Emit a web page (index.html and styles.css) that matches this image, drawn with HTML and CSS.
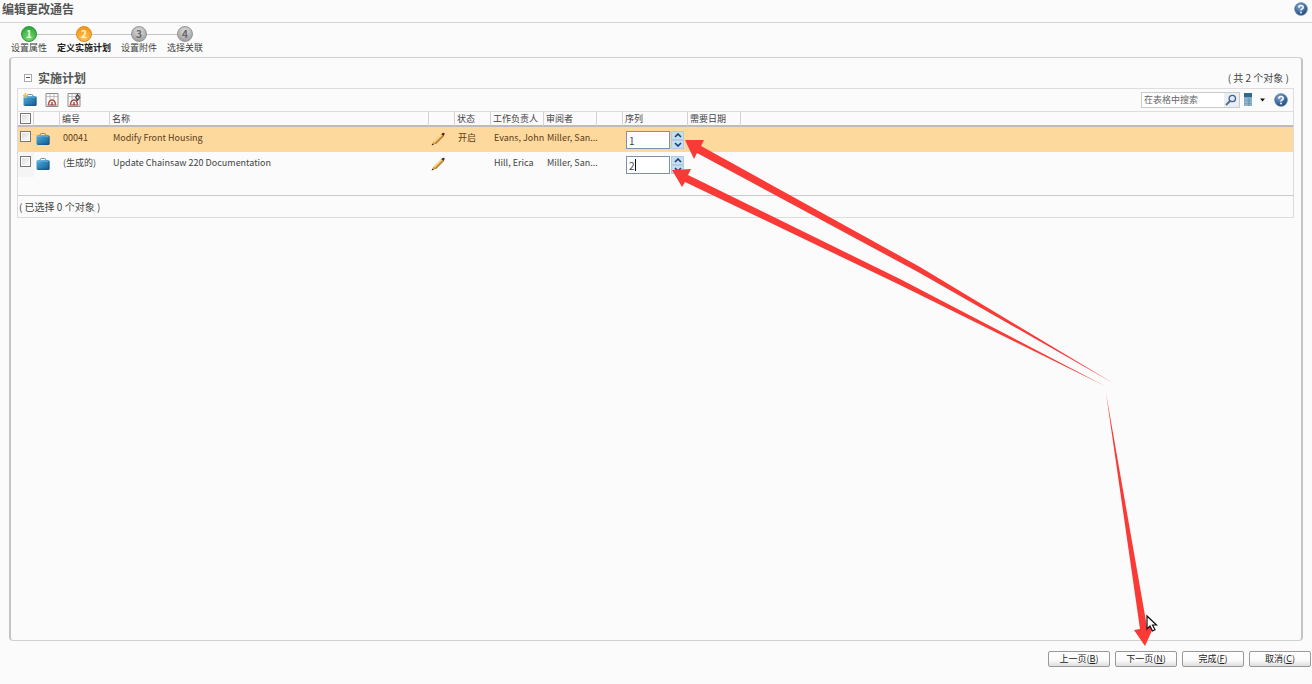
FILE: index.html
```html
<!DOCTYPE html>
<html lang="zh-CN">
<head>
    <meta charset="UTF-8">
    <meta name="viewport" content="width=device-width, initial-scale=1.0">
    <title>编辑更改通告</title>
    <link rel="stylesheet" href="styles.css">
</head>
<body>
    <!-- Shared icons -->
    <svg class="defs" width="0" height="0" aria-hidden="true">
        <defs>
            <linearGradient id="blue" x1="0" y1="0" x2="1" y2="1">
                <stop offset="0" stop-color="#4fb0df"/>
                <stop offset="1" stop-color="#11588f"/>
            </linearGradient>
            <radialGradient id="ball" cx="0.4" cy="0.3" r="0.8">
                <stop offset="0" stop-color="#7fa9d6"/>
                <stop offset="1" stop-color="#123c70"/>
            </radialGradient>
            <symbol id="case" viewBox="0 0 14 14">
                <path d="M4 3.200Q4 1.500 5.500 1.500h3Q10 1.500 10 3.200" fill="none" stroke="#5d8eab"/>
                <path d="M.5 4.500Q.5 3 2 3h10Q13.500 3 13.500 4.500v7Q13.500 13 12 13H2Q.5 13 .5 11.500z" fill="url(#blue)"/>
                <path d="M1 4.300Q7 3.200 13 4.300" fill="none" stroke="#8ccae8" stroke-width=".7"/>
                <path d="M13 4v8.200H2" fill="none" stroke="#1c4f78" stroke-width=".7"/>
            </symbol>
            <symbol id="pencil" viewBox="0 0 14 14">
                <path d="M1 13.200l1.500-3.700L10.500 2l2 2L4.500 12z" fill="#d9983a"/>
                <path d="M2.800 10.200L10.800 2.600" stroke="#fbe09a" stroke-width="1.300"/>
                <path d="M4.500 12l8-8" stroke="#7a4a12" stroke-width=".8"/>
                <path d="M10.300 2.200Q12.200.3 13.200 1t-.5 3z" fill="#452a24"/>
                <path d="M.6 13.600l.8-2 1.300 1.200z" fill="#33241c"/>
            </symbol>
            <symbol id="sheet" viewBox="0 0 14 14">
                <path d="M1 .5h12v13H1z" fill="#fafafa" stroke="#8d8d8d"/>
                <path d="M1 3.500h12M5 1v5M9 1v5" stroke="#b0b0b0" stroke-width=".8"/>
                <path d="M3.500 11.500Q4 7 7 7t3.500 4.500" fill="none" stroke="#a9483f" stroke-width="1.300"/>
                <path d="M2.500 12h9M7 9v3" stroke="#8d2b26" stroke-width="1.200"/>
            </symbol>
            <symbol id="help" viewBox="0 0 14 14">
                <circle cx="7" cy="7" r="6.300" fill="url(#ball)" stroke="#5c7da3" stroke-width=".8"/>
                <path d="M4.800 5.600Q4.900 3.500 7 3.500T9.200 5.400Q9.200 6.500 8 7T7 8.500" fill="none" stroke="#fff" stroke-width="1.500"/>
                <circle cx="7" cy="10.500" r=".9" fill="#fff"/>
            </symbol>
        </defs>
    </svg>

    <header class="titlebar">
        <h1>编辑更改通告</h1>
        <button class="icon-btn" type="button" aria-label="帮助"><svg width="14" height="14"><use href="#help"/></svg></button>
    </header>

    <ol class="steps">
        <li class="step done"><span class="ball">1</span><span>设置属性</span></li>
        <li class="step current"><span class="ball">2</span><span>定义实施计划</span></li>
        <li class="step"><span class="ball">3</span><span>设置附件</span></li>
        <li class="step"><span class="ball">4</span><span>选择关联</span></li>
    </ol>

    <main class="panel">
        <div class="section-head">
            <button class="collapse" type="button" aria-label="折叠"></button>
            <h2>实施计划</h2>
            <span class="count">( 共 2 个对象 )</span>
        </div>

        <div class="grid">
            <div class="toolbar">
                <button class="icon-btn" type="button" aria-label="新建">
                    <svg width="14" height="14"><use href="#case"/><path d="M2.500 0v5M0 2.500h5" stroke="#f2bc57" stroke-width="1.500"/></svg>
                </button>
                <button class="icon-btn" type="button" aria-label="计划"><svg width="14" height="14"><use href="#sheet"/></svg></button>
                <button class="icon-btn" type="button" aria-label="编辑计划">
                    <svg width="14" height="14"><use href="#sheet"/><path d="M10.500 1l2.500 3.500-2.500 3.500-2-3.500z" fill="#555" stroke="#222" stroke-width=".6"/><circle cx="10.700" cy="4.600" r="1" fill="#eee"/></svg>
                </button>
                <div class="search">
                    <input type="text" placeholder="在表格中搜索" aria-label="在表格中搜索">
                    <button type="button" aria-label="搜索">
                        <svg width="12" height="12" viewBox="0 0 12 12"><path d="M1 11l4-4" stroke="#5a6f92" stroke-width="2"/><circle cx="7.300" cy="4.500" r="3.200" fill="#dcebf8" stroke="#46608c" stroke-width="1.300"/></svg>
                    </button>
                </div>
                <button class="icon-btn views" type="button" aria-label="视图">
                    <svg width="22" height="14" viewBox="0 0 22 14"><path d="M0 0h8v4H0z" fill="#2d6b93"/><path d="M0 5h8v2H0zM0 8h8v2H0zM0 11h8v2H0z" fill="#8bb4cd"/><path d="M0 4.500h8M0 7.500h8M0 10.500h8M5 5v8" stroke="#4e7f9f" stroke-width=".7"/><path d="M16 5.500h5L18.500 8.500z" fill="#111"/></svg>
                </button>
                <button class="icon-btn" type="button" aria-label="表格帮助"><svg width="14" height="14"><use href="#help"/></svg></button>
            </div>

            <table>
                <colgroup>
                    <col class="c-check"><col class="c-icon"><col class="c-num"><col class="c-name"><col class="c-icon"><col class="c-state">
                    <col class="c-person"><col class="c-person"><col class="c-icon"><col class="c-seq"><col class="c-date"><col>
                </colgroup>
                <thead>
                    <tr>
                        <th><input type="checkbox" aria-label="全选"></th>
                        <th></th>
                        <th>编号</th>
                        <th>名称</th>
                        <th></th>
                        <th>状态</th>
                        <th>工作负责人</th>
                        <th>审阅者</th>
                        <th></th>
                        <th>序列</th>
                        <th>需要日期</th>
                        <th></th>
                    </tr>
                </thead>
                <tbody>
                    <tr class="highlight">
                        <td><input type="checkbox" aria-label="选择 00041"></td>
                        <td><svg class="row-icon" width="14" height="14"><use href="#case"/></svg></td>
                        <td>00041</td>
                        <td>Modify Front Housing</td>
                        <td><svg class="row-icon" width="14" height="14"><use href="#pencil"/></svg></td>
                        <td>开启</td>
                        <td>Evans, John</td>
                        <td>Miller, San...</td>
                        <td></td>
                        <td>
                            <div class="spinner">
                                <input type="text" inputmode="numeric" value="1" aria-label="序列 00041">
                                <div class="spin-btns">
                                    <button type="button" aria-label="增加"><svg width="8" height="5"><path d="M1 4l3-3 3 3" fill="none" stroke="#1f3b70" stroke-width="1.600"/></svg></button>
                                    <button type="button" aria-label="减少"><svg width="8" height="5"><path d="M1 1l3 3 3-3" fill="none" stroke="#1f3b70" stroke-width="1.600"/></svg></button>
                                </div>
                            </div>
                        </td>
                        <td></td>
                        <td></td>
                    </tr>
                    <tr>
                        <td><input type="checkbox" aria-label="选择 (生成的)"></td>
                        <td><svg class="row-icon" width="14" height="14"><use href="#case"/></svg></td>
                        <td>(生成的)</td>
                        <td>Update Chainsaw 220 Documentation</td>
                        <td><svg class="row-icon" width="14" height="14"><use href="#pencil"/></svg></td>
                        <td></td>
                        <td>Hill, Erica</td>
                        <td>Miller, San...</td>
                        <td></td>
                        <td>
                            <div class="spinner active">
                                <input type="text" inputmode="numeric" value="2" aria-label="序列 (生成的)">
                                <div class="spin-btns">
                                    <button type="button" aria-label="增加"><svg width="8" height="5"><path d="M1 4l3-3 3 3" fill="none" stroke="#1f3b70" stroke-width="1.600"/></svg></button>
                                    <button type="button" aria-label="减少"><svg width="8" height="5"><path d="M1 1l3 3 3-3" fill="none" stroke="#1f3b70" stroke-width="1.600"/></svg></button>
                                </div>
                            </div>
                        </td>
                        <td></td>
                        <td></td>
                    </tr>
                </tbody>
            </table>

            <div class="status">( 已选择 0 个对象 )</div>
        </div>
    </main>

    <footer class="actions">
        <button type="button">上一页(<u>B</u>)</button>
        <button type="button">下一页(<u>N</u>)</button>
        <button type="button">完成(<u>F</u>)</button>
        <button type="button">取消(<u>C</u>)</button>
    </footer>

    <!-- Arrows and pointer on top of the page -->
    <svg class="overlay" width="1312" height="684" viewBox="0 0 1312 684" aria-hidden="true">
        <g fill="#f93a37">
            <path d="M685 140L704 140L701 146L920 267L1113 383L918 272L697 153L694 159z"/>
            <path d="M672 170L691 169L688 175L900 279L1105 386L898 284L685 182L682 187z"/>
            <path d="M1106 393L1147 627L1154 626L1145 646L1134 630L1140 629z"/>
        </g>
        <path d="M1147 616v13l3-3 2.500 5 2.500-1.300-2.500-4.700h4z" fill="#fff" stroke="#111" stroke-width="1.200"/>
    </svg>
</body>
</html>
```
FILE: styles.css
```css
* {
    box-sizing: border-box;
}
body {
    display: flex;
    flex-direction: column;
    min-height: 100vh;
    margin: 0;
    background: #fafbfa;
    color: #444;
    font-family: "Noto Sans CJK SC", "Open Sans", sans-serif;
    font-size: 9px;
    line-height: 12px;
}
button, input {
    font: inherit;
    color: inherit;
}
svg {
    display: block;
}
.defs {
    position: absolute;
}
.icon-btn {
    padding: 0;
    border: 0;
    background: none;
}

/* Title */
.titlebar {
    display: flex;
    justify-content: space-between;
    height: 23px;
    padding: 2px 4px 0 2px;
    border-bottom: 1px solid #d2d3d2;
}
.titlebar .icon-btn {
    height: 14px;
}
h1, h2 {
    margin: 0;
    color: #555;
    font-size: 12px;
    font-weight: bold;
    line-height: 14px;
}

/* Wizard steps */
.steps {
    display: flex;
    gap: 10px;
    height: 34px;
    margin: 0;
    padding: 3px 11px 0;
    list-style: none;
}
.step {
    position: relative;
    display: flex;
    flex-direction: column;
    align-items: center;
}
.step + .step::before {
    content: "";
    position: absolute;
    top: 8px;
    right: 50%;
    width: 55px;
    height: 1px;
    background: #c4c4c4;
}
.ball {
    position: relative;
    z-index: 1;
    width: 16px;
    height: 16px;
    border: 1px solid #959595;
    border-radius: 50%;
    background: radial-gradient(circle at 50% 30%, #ddd, #929292);
    color: #666;
    font-size: 10px;
    font-weight: bold;
    line-height: 14px;
    text-align: center;
}
.done .ball {
    border-color: #2b9638;
    background: radial-gradient(circle at 50% 80%, #7ed96f, #1f9c33);
    color: #e8ffe0;
}
.current {
    color: #222;
    font-weight: bold;
}
.current .ball {
    z-index: 2;
    border-color: #e08a18;
    background: radial-gradient(circle at 50% 80%, #ffc454, #f28c0d);
    color: #fff4d0;
}

/* Panel */
.panel {
    flex: 1;
    margin: 0 9px;
    padding: 11px 7px 11px 6px;
    border: 1px solid #cfd0cf;
    border-right: 2px solid #c3c4c4;
    border-left: 2px solid #c3c4c4;
    border-radius: 4px;
}
.section-head {
    display: flex;
    align-items: center;
    height: 19px;
    padding: 0 5px 2px 7px;
}
.collapse {
    width: 8px;
    height: 8px;
    margin-right: 6px;
    padding: 0;
    border: 1px solid #aaa;
    background: linear-gradient(#555, #555) center / 4px 1px no-repeat #fff;
}
.count {
    margin-left: auto;
    font-size: 10px;
}
.grid {
    border: 1px solid #dcdddc;
}
.toolbar {
    display: flex;
    align-items: center;
    gap: 8px;
    height: 22px;
    padding: 0 5px;
}
.search {
    display: flex;
    width: 99px;
    height: 16px;
    margin-left: auto;
    border: 1px solid #cbcbcb;
    background: #fff;
}
.search input {
    flex: 1;
    min-width: 0;
    padding: 0 2px;
    border: 0;
    background: none;
}
.search input::placeholder {
    color: #666;
}
.search button {
    width: 15px;
    padding: 0 1px;
    border: 0;
    background: #e9eef3;
}
.views {
    margin-left: -4px;
}

/* Table */
table {
    width: 100%;
    table-layout: fixed;
    border-collapse: separate;
    border-spacing: 0;
}
.c-check { width: 16px; }
.c-icon { width: 26px; }
.c-num { width: 50px; }
.c-name { width: 319px; }
.c-state { width: 36px; }
.c-person { width: 53px; }
.c-seq { width: 65px; }
.c-date { width: 53px; }
th {
    height: 16px;
    padding: 0 2px;
    border-top: 1px solid #dcdddc;
    border-right: 1px solid #d3d3d3;
    border-bottom: 2px solid #b9bbbd;
    font-weight: normal;
    text-align: left;
    white-space: nowrap;
}
th:last-child {
    border-right: 0;
}
td {
    height: 25px;
    padding: 5px 3px 0;
    vertical-align: top;
    white-space: nowrap;
}
th:first-child, td:first-child {
    padding-right: 0;
    padding-left: 2px;
}
td:first-child {
    padding-top: 4px;
    background: #f5f5f5;
}
.highlight td {
    background: #fed99d;
    color: #5c3d1a;
}
input[type="checkbox"] {
    display: block;
    appearance: none;
    width: 11px;
    height: 11px;
    margin: 0;
    border: 1px solid #777;
    background: linear-gradient(135deg, #d9d9d9, #fff);
    box-shadow: inset 0 0 0 1px #fff;
}
.row-icon {
    margin-left: -1px;
}
.spinner {
    position: relative;
    display: flex;
    gap: 1px;
    height: 18px;
    margin-top: -1px;
}
.spinner input {
    width: 44px;
    padding: 2px 2px 0;
    border: 1px solid #8090a8;
    background: #fff;
    color: #444;
    font-size: 10px;
}
.spinner.active::after {
    content: "";
    position: absolute;
    top: 3px;
    left: 9px;
    width: 1px;
    height: 12px;
    background: #111;
}
.spin-btns {
    display: flex;
    flex-direction: column;
    width: 13px;
}
.spin-btns button {
    display: flex;
    flex: 1;
    align-items: center;
    justify-content: center;
    padding: 0;
    border: 1px solid #b3cbe0;
    background: #c4dff0;
}
.status {
    height: 22px;
    margin-top: 18px;
    padding: 5px 1px 0;
    border-top: 1px solid #c9caca;
    font-size: 10px;
}

/* Buttons */
.actions {
    display: flex;
    justify-content: flex-end;
    gap: 5px;
    height: 43px;
    padding: 10px 1px 0;
}
.actions button {
    width: 62px;
    height: 16px;
    padding: 0;
    border: 1px solid #999;
    border-radius: 2px;
    background: linear-gradient(#fff, #fafafa 60%, #dedede);
    color: #222;
    line-height: 14px;
}

.overlay {
    position: absolute;
    top: 0;
    left: 0;
    pointer-events: none;
}
```
